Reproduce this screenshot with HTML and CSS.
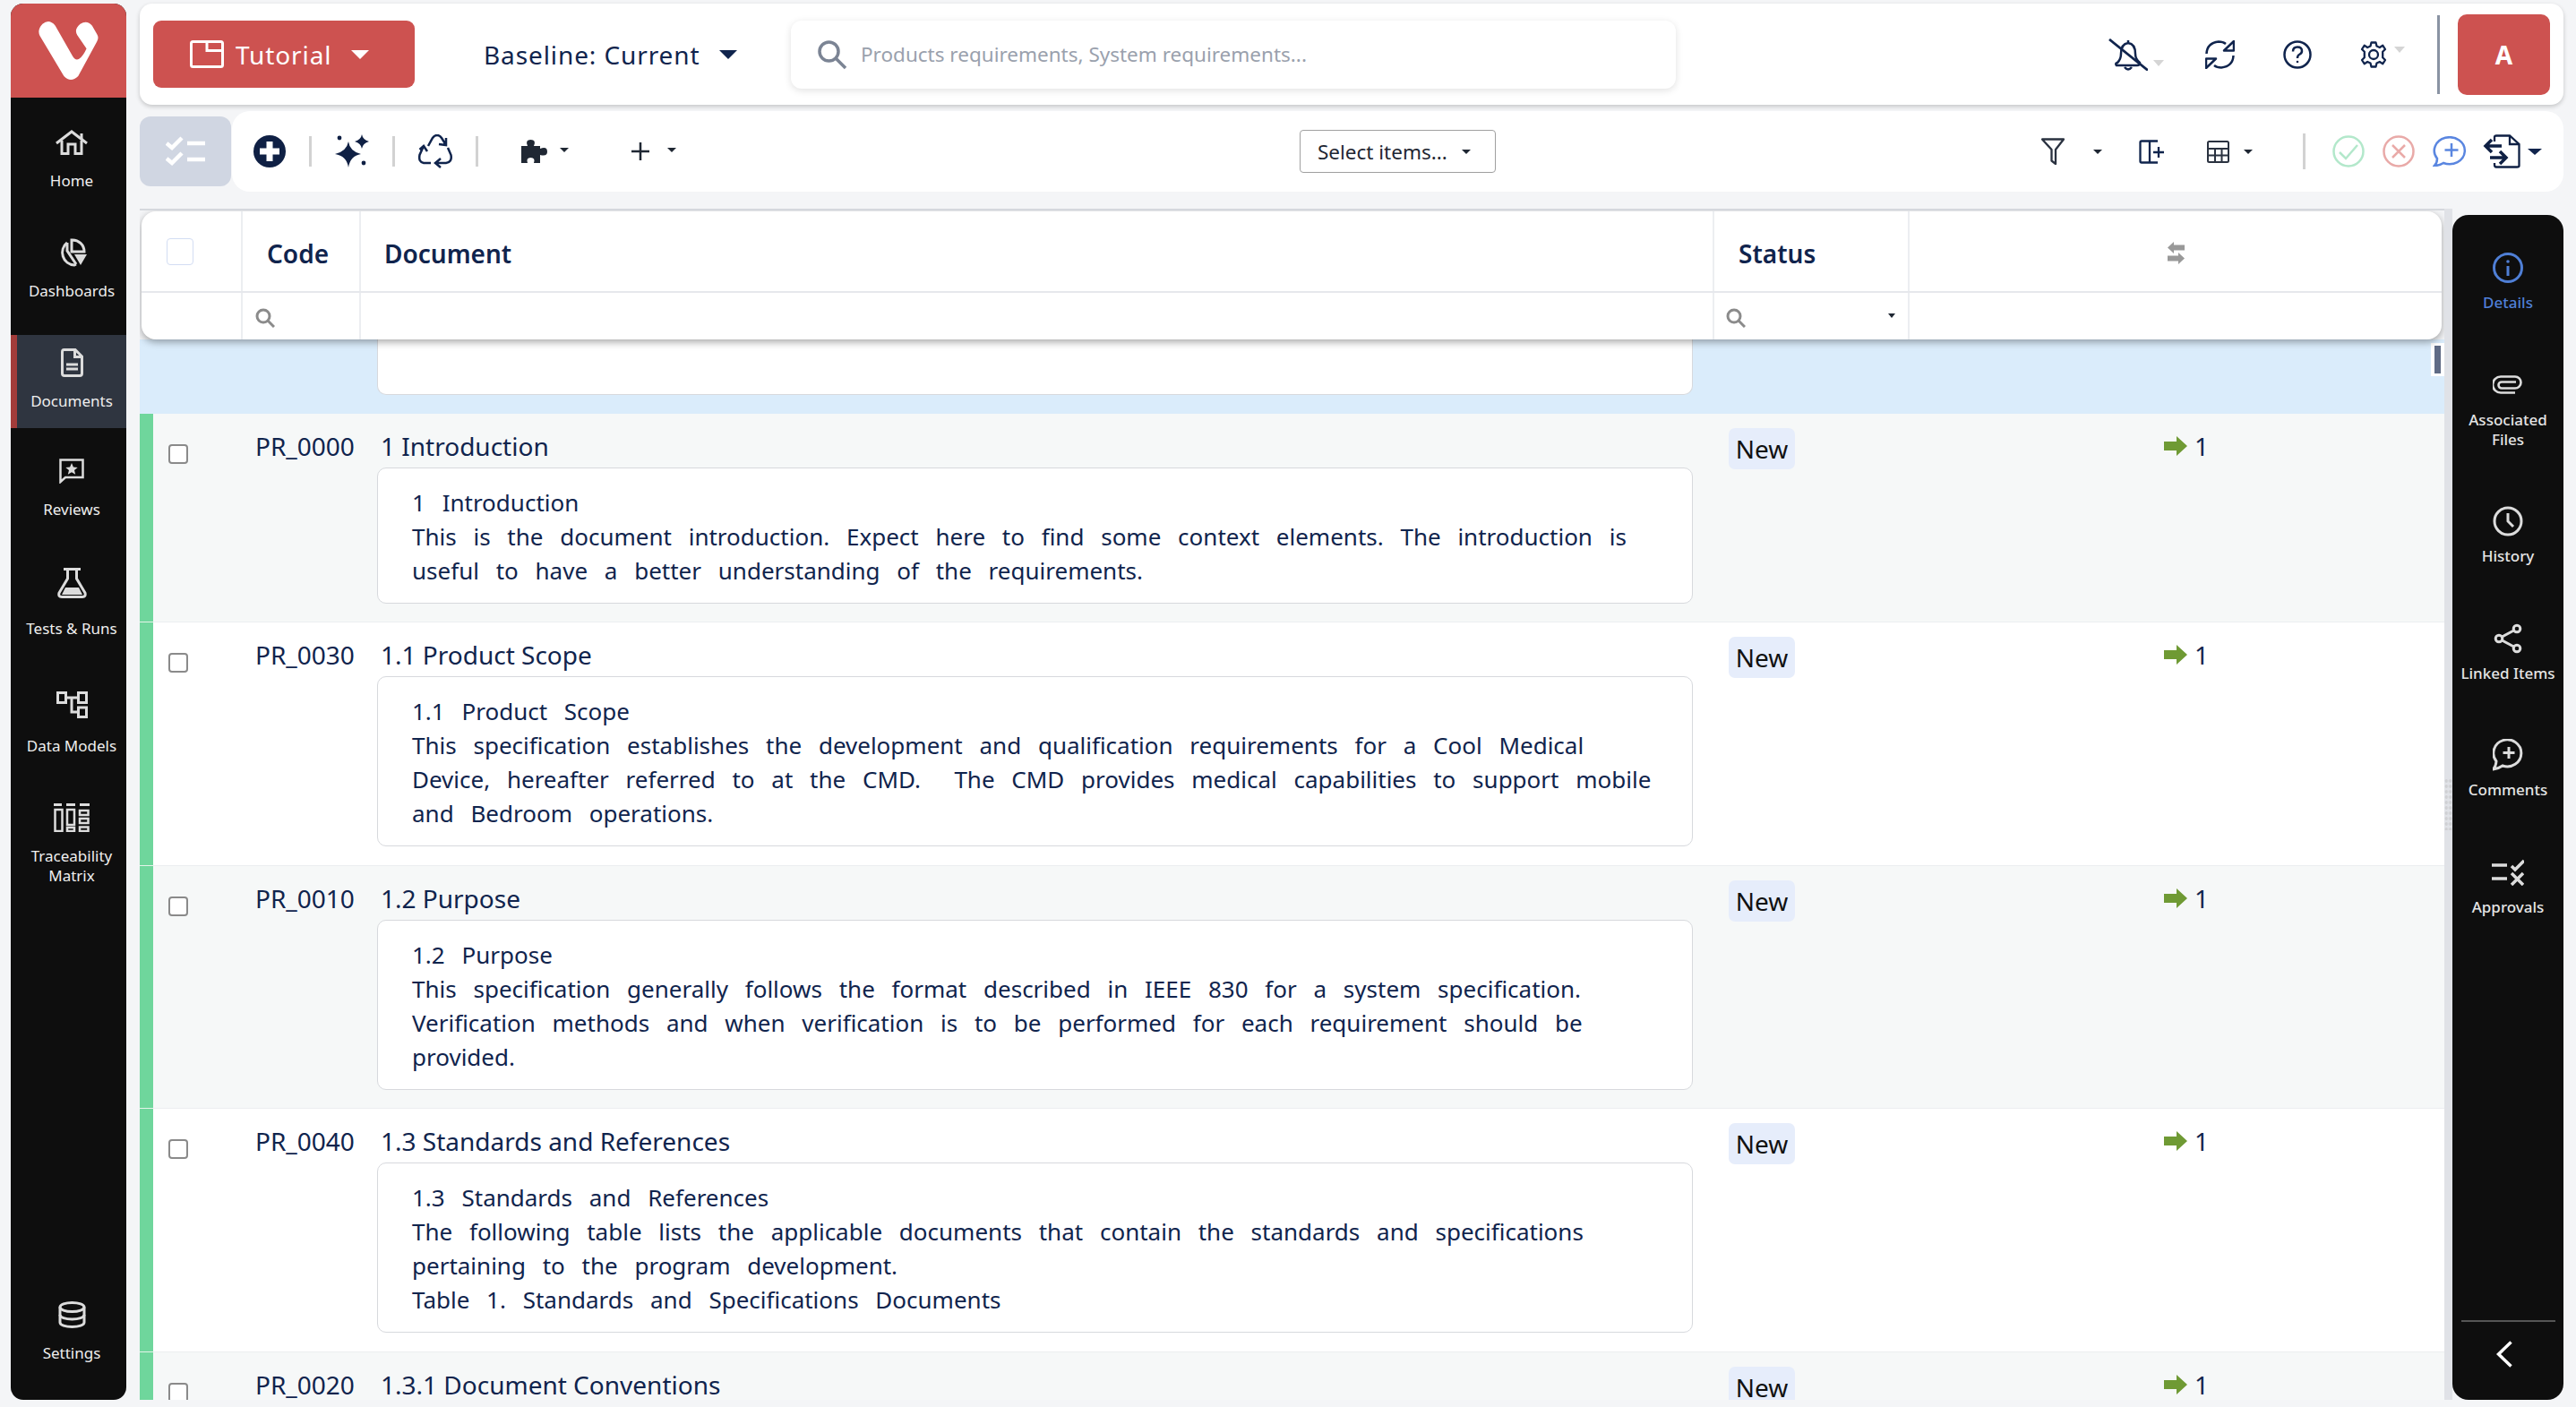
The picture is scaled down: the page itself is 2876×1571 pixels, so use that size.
FILE: index.html
```html
<!DOCTYPE html>
<html lang="en">
<head>
    <meta charset="UTF-8">
    <title>Documents | Tutorial</title>
    <link rel="stylesheet" href="styles.css">
</head>
<body>

    <!-- Left navigation -->
    <nav class="side-nav">
        <div class="logo">
            <svg width="75" height="73" viewBox="60 30 225 220"><path fill="#fff" d="M76 90 Q66 70 85 50 Q108 32 128 56 L186 158 Q196 176 208 168 Q222 158 233 133 L202 88 Q190 68 212 50 Q235 36 252 56 L268 84 Q276 96 268 110 L205 226 Q180 250 157 226 Z"/></svg>
        </div>
        <a class="nav-item nav-first">
            <span class="nav-icon"><svg width="36" height="28" viewBox="0 0 36 28" fill="none" stroke="currentColor" stroke-width="3"><path d="M1 15 L18 2 L35 15"/><path d="M29 10 V4"/><path d="M7 12 V26.500 H14 V16 H22 V26.500 H29 V12"/></svg></span>
            <span class="nav-label">Home</span>
        </a>
        <a class="nav-item">
            <span class="nav-icon"><svg width="34" height="32" viewBox="0 0 34 32" fill="none" stroke="currentColor" stroke-width="3"><path d="M12 5 A14 14 0 0 0 20 30 L22 29"/><path d="M12 5 V14 L22 29"/><path d="M17 2 A13 13 0 0 1 31 15 H17 Z"/><path fill="currentColor" stroke="none" d="M20 18 H34 L27 30 Z"/></svg></span>
            <span class="nav-label">Dashboards</span>
        </a>
        <a class="nav-item active">
            <span class="nav-icon"><svg width="25" height="32" viewBox="0 0 25 32" fill="none" stroke="currentColor" stroke-width="3"><path d="M3.500 1.500 H16 L23.500 9 V28 Q23.500 30.500 21 30.500 H4 Q1.500 30.500 1.500 28 V4 Q1.500 1.500 3.500 1.500 Z"/><path d="M15.500 2 V9.500 H23"/><path d="M6 18 H19 M6 23 H19"/></svg></span>
            <span class="nav-label">Documents</span>
        </a>
        <a class="nav-item nav-reviews">
            <span class="nav-icon"><svg width="28" height="28" viewBox="0 0 28 28" fill="none" stroke="currentColor" stroke-width="2.500"><path d="M1.500 1.500 H26.500 V21 H7 L1.500 26 Z"/><path fill="currentColor" stroke="none" d="M14 5 L15.900 9.500 L20.700 9.900 L17 13 L18.200 17.700 L14 15.200 L9.800 17.700 L11 13 L7.300 9.900 L12.100 9.500 Z"/></svg></span>
            <span class="nav-label">Reviews</span>
        </a>
        <a class="nav-item nav-tests">
            <span class="nav-icon"><svg width="33" height="34" viewBox="0 0 33 34" fill="none" stroke="currentColor" stroke-width="3"><path d="M7 1.500 H26"/><path d="M11.500 2 V12 L2 28 Q0.800 32.500 5 32.500 H28 Q32 32.500 31 28 L21.500 12 V2"/><path fill="currentColor" stroke="none" d="M9 22 H24 L28 30 H5 Z"/></svg></span>
            <span class="nav-label">Tests &amp; Runs</span>
        </a>
        <a class="nav-item nav-models">
            <span class="nav-icon"><svg width="35" height="30" viewBox="0 0 35 30" fill="none" stroke="currentColor" stroke-width="3"><rect x="1.500" y="1.500" width="9" height="11"/><rect x="24.500" y="1.500" width="9" height="11"/><rect x="24.500" y="18" width="9" height="10.500"/><path d="M11 7 H24 M17 7 V23 H24"/></svg></span>
            <span class="nav-label">Data Models</span>
        </a>
        <a class="nav-item">
            <span class="nav-icon"><svg width="40" height="32" viewBox="0 0 40 32" fill="none" stroke="currentColor" stroke-width="2.500"><path d="M0 1.500 H9 M14 1.500 H24 M29 1.500 H40" stroke-width="3"/><rect x="1.500" y="7" width="8" height="24"/><rect x="15" y="7" width="8" height="17"/><rect x="29" y="8" width="9.500" height="5"/><rect x="29" y="17" width="9.500" height="5"/><rect x="15" y="27" width="8" height="4"/><rect x="29" y="26.500" width="9.500" height="4.500"/></svg></span>
            <span class="nav-label">Traceability<br>Matrix</span>
        </a>
        <a class="nav-item nav-bottom">
            <span class="nav-icon"><svg width="31" height="30" viewBox="0 0 31 30" fill="none" stroke="currentColor" stroke-width="3"><ellipse cx="15.500" cy="6.500" rx="13.500" ry="5"/><path d="M2 6.500 V23.500 C2 26.500 8 28.500 15.500 28.500 C23 28.500 29 26.500 29 23.500 V6.500"/><path d="M2 15 C2 18 8 20 15.500 20 C23 20 29 18 29 15"/></svg></span>
            <span class="nav-label">Settings</span>
        </a>
    </nav>

    <div class="main">
        <!-- Top bar -->
        <header class="top-bar">
            <button class="project-btn">
                <svg width="38" height="31" viewBox="0 0 38 31" fill="none" stroke="#fff" stroke-width="3"><path d="M3.500 1.500 H34.500 Q36.500 1.500 36.500 3.500 V27.500 Q36.500 29.500 34.500 29.500 H3.500 Q1.500 29.500 1.500 27.500 V3.500 Q1.500 1.500 3.500 1.500 Z"/><path d="M19 2 V11.500 H36"/></svg>
                <span>Tutorial</span>
                <i class="caret caret-white"></i>
            </button>
            <div class="baseline">Baseline: Current <i class="caret caret-navy"></i></div>
            <div class="search-box">
                <svg width="34" height="34" viewBox="0 0 34 34" fill="none" stroke="#7b8494" stroke-width="3.500"><circle cx="13.500" cy="13.500" r="10.500"/><path d="M21 21 L32 32"/></svg>
                <span>Products requirements, System requirements...</span>
            </div>
            <div class="top-icons">
                <svg class="ic-bell" width="44" height="36" viewBox="0 0 44 36" fill="none" stroke="#10244d" stroke-width="2.500"><path d="M22 2 V5 M10 27 Q14 23 14 17 Q14 6 22 5 Q30 6 30 17 Q30 23 35 27 Q35 30 32 30 H9 Q7 28 10 27 Z"/><path d="M18 32 Q22 37 26 32"/><path d="M1 1 L44 35.500" stroke-width="2.800"/></svg>
                <i class="caret caret-mute"></i>
                <svg class="ic-sync" width="33" height="32" viewBox="0 0 33 32" fill="none" stroke="#10244d" stroke-width="2.500"><path d="M1.500 15 Q2 3 15 1.500 Q20 1.500 23 4"/><path d="M31.500 17 Q31 29 18 30.500 Q13 30.500 10 28"/><path d="M32 1 V11.500 H21 Z M1 31 V20.500 H12 Z" stroke-linejoin="round"/></svg>
                <svg class="ic-help" width="32" height="32" viewBox="0 0 32 32" fill="none" stroke="#10244d" stroke-width="2.500"><circle cx="16" cy="16" r="14.500"/><path d="M11 12.500 Q11 7.500 16 7.500 Q21 7.500 21 12 Q21 14.500 18 16 Q16 17 16 20"/><circle cx="16" cy="24" r="1.300" fill="#10244d" stroke="none"/></svg>
                <svg class="ic-gear" width="30" height="30" viewBox="0 0 30 30" fill="none" stroke="#10244d" stroke-width="2.300"><circle cx="15" cy="15" r="5"/><path d="M12.500 1.500 H17.500 L18.500 5.500 L21.800 7 L25.300 4.800 L28 9 L25.200 11.800 V18.200 L28 21 L25.300 25.200 L21.800 23 L18.500 24.500 L17.500 28.500 H12.500 L11.500 24.500 L8.200 23 L4.700 25.200 L2 21 L4.800 18.200 V11.800 L2 9 L4.700 4.800 L8.200 7 L11.500 5.500 Z" stroke-linejoin="round"/></svg>
                <i class="caret caret-mute"></i>
            </div>
            <div class="avatar-wrap"><div class="avatar">A</div></div>
        </header>

        <!-- Toolbar -->
        <div class="tool-row">
            <div class="tasks-btn">
                <svg width="44" height="34" viewBox="0 0 44 34" fill="none" stroke="#fff" stroke-width="4.500"><path d="M1 8 L7 13 L18 2 M1 25 L7 30 L18 19"/><path d="M24 8 H44 M24 26 H44"/></svg>
            </div>
            <div class="toolbar">
                <div class="tool-group">
                    <svg width="36" height="36" viewBox="0 0 36 36"><circle cx="18" cy="18" r="18" fill="#0f2044"/><path fill="#fff" d="M14.500 7 H21.500 V14.500 H29 V21.500 H21.500 V29 H14.500 V21.500 H7 V14.500 H14.500 Z"/></svg>
                    <i class="tool-sep"></i>
                    <svg width="38" height="38" viewBox="0 0 38 38" fill="#0f2044"><path d="M15 8 Q16.500 19 29 22 Q17 24 15 37 Q13 24 0 22 Q13 19 15 8 Z"/><path d="M30 0 Q31 6 38 8 Q31 10 30 16 Q29 10 22 8 Q29 6 30 0 Z"/><circle cx="5" cy="4" r="2.400"/><circle cx="32" cy="32" r="2.400"/></svg>
                    <i class="tool-sep"></i>
                    <svg width="38" height="38" viewBox="0 0 38 38" fill="none" stroke="#10244d" stroke-width="2.500"><path d="M11 13 L16 4 Q18 1 21 1 Q24 1 26 4 L31 12 M31 4 L31 12 L23 11"/><path d="M6 13 L1.500 23 Q0 31 6 32 H14 M1.500 17 L6 13 L10 19"/><path d="M33 15 L36.500 23 Q38 31 31 32 H19 M25 27 L19 32 L25 37"/></svg>
                    <i class="tool-sep"></i>
                </div>
                <div class="tool-btn tool-puzzle">
                    <svg width="29" height="26" viewBox="0 0 29 26" fill="#1f2733"><path d="M0 7 H7 Q4 0 10.500 0 Q17 0 14 7 H21 V10 Q29 7 29 13.500 Q29 19 21 17 V26 H14 Q16 20 10.500 20 Q5 20 7 26 H0 Z"/></svg>
                    <i class="caret caret-small"></i>
                </div>
                <div class="tool-btn tool-add">
                    <svg width="20" height="20" viewBox="0 0 20 20" stroke="#1f2733" stroke-width="2.500"><path d="M10 0 V20 M0 10 H20"/></svg>
                    <i class="caret caret-small"></i>
                </div>
                <div class="select-items">Select items... <i class="caret caret-small"></i></div>
                <div class="tool-right">
                    <svg class="ic-filter" width="26" height="30" viewBox="0 0 26 30" fill="none" stroke="#2a3240" stroke-width="2.300"><path d="M1 1.500 H25 L16 13 V29 L11.500 25.500 V13 Z" stroke-linejoin="round"/></svg>
                    <i class="caret caret-small ic-caret1"></i>
                    <svg class="ic-split" width="28" height="27" viewBox="0 0 28 27" fill="none" stroke="#10244d" stroke-width="2.300"><path d="M21 1.500 H3 Q1.500 1.500 1.500 3 V24 Q1.500 25.500 3 25.500 H21"/><path d="M12 1.500 V25.500"/><path d="M16 14 H28 M22 8 V20"/></svg>
                    <svg class="ic-table" width="25" height="25" viewBox="0 0 25 25" fill="none" stroke="#2a3240" stroke-width="2"><rect x="1" y="1" width="23" height="23" rx="1.500"/><path d="M1 9 H24 M1 16.500 H24 M9 9 V24 M16.500 9 V24"/></svg>
                    <i class="caret caret-small ic-caret2"></i>
                    <i class="tool-sep ic-sep"></i>
                    <svg class="ic-ok" width="36" height="36" viewBox="0 0 36 36" fill="none" stroke="#b3e8cb" stroke-width="2.500"><circle cx="18" cy="18" r="16.500"/><path d="M8 19 L15 26 L28 11"/></svg>
                    <svg class="ic-no" width="36" height="36" viewBox="0 0 36 36" fill="none" stroke="#e9aaa8" stroke-width="2.500"><circle cx="18" cy="18" r="16.500"/><path d="M11 11 L25 25 M25 11 L11 25"/></svg>
                    <svg class="ic-chat" width="38" height="34" viewBox="0 0 38 34" fill="none" stroke="#5a86e0" stroke-width="2.500"><path d="M5 25 A17 15 0 1 1 12 30 Q7 33 2 33 Q5 30 5 25 Z"/><path d="M21 8 V23 M13.500 15.500 H28.500"/></svg>
                    <svg class="ic-export" width="42" height="38" viewBox="0 0 42 38" fill="none" stroke="#0f2044" stroke-width="2.300"><path d="M13 8 V3 Q13 1.500 15 1.500 H30 L40.500 11 V35 Q40.500 36.500 38 36.500 H15 Q13 36.500 13 34 V32"/><path d="M30 2 V11 H40"/><path d="M4 13 H21 M10 6 L3 13 L10 20 M8 26 H25 M19 19 L26 26 L19 33" stroke-width="3.500"/></svg>
                    <i class="caret caret-navy-small"></i>
                </div>
            </div>
        </div>

        <div class="content">
            <section class="doc-table">
                <!-- Frozen header -->
                <div class="grid-head">
                    <div class="head-row">
                        <div class="cell cell-check"><span class="head-check"></span></div>
                        <div class="cell head-code">Code</div>
                        <div class="cell head-doc">Document</div>
                        <div class="cell head-status">Status</div>
                        <div class="cell head-links">
                            <svg width="19" height="25" viewBox="0 0 19 25" fill="#999"><path d="M7 0 V3.500 H19 V9.500 H7 V13 L0 6.500 Z"/><path d="M12 12 V15.500 H0 V21.500 H12 V25 L19 18.500 Z"/></svg>
                        </div>
                    </div>
                    <div class="filter-row">
                        <div class="cell cell-check"></div>
                        <div class="cell filter-cell"><svg width="22" height="22" viewBox="0 0 22 22" fill="none" stroke="#8b8b8b" stroke-width="3"><circle cx="9" cy="9" r="7"/><path d="M14 14 L21 21"/></svg></div>
                        <div class="cell filter-doc"></div>
                        <div class="cell filter-status">
                            <svg width="22" height="22" viewBox="0 0 22 22" fill="none" stroke="#8b8b8b" stroke-width="3"><circle cx="9" cy="9" r="7"/><path d="M14 14 L21 21"/></svg>
                            <i class="caret caret-tiny"></i>
                        </div>
                        <div class="cell filter-links"></div>
                    </div>
                </div>

                <div class="grid-body">
                    <div class="row row-selected">
                        <div class="doc-card doc-card-cut"></div>
                    </div>

                    <div class="row">
                        <div class="strip"></div>
                        <div class="col-check"><span class="check"></span></div>
                        <div class="col-code">PR_0000</div>
                        <div class="col-doc">
                            <div class="doc-title">1 Introduction</div>
                            <div class="doc-card">1 Introduction<br>This is the document introduction. Expect here to find some context elements. The introduction is useful to have a better understanding of the requirements.</div>
                        </div>
                        <div class="col-status"><span class="badge">New</span></div>
                        <div class="col-links"><svg width="26" height="22" viewBox="0 0 26 22" fill="#6f9a34"><path d="M0 6 H14 V0 L26 11 L14 22 V16 H0 Z"/></svg><span>1</span></div>
                    </div>

                    <div class="row">
                        <div class="strip"></div>
                        <div class="col-check"><span class="check"></span></div>
                        <div class="col-code">PR_0030</div>
                        <div class="col-doc">
                            <div class="doc-title">1.1 Product Scope</div>
                            <div class="doc-card">1.1 Product Scope<br>This specification establishes the development and qualification requirements for a Cool Medical Device, hereafter referred to at the CMD. &nbsp;The CMD provides medical capabilities to support mobile and Bedroom operations.</div>
                        </div>
                        <div class="col-status"><span class="badge">New</span></div>
                        <div class="col-links"><svg width="26" height="22" viewBox="0 0 26 22" fill="#6f9a34"><path d="M0 6 H14 V0 L26 11 L14 22 V16 H0 Z"/></svg><span>1</span></div>
                    </div>

                    <div class="row">
                        <div class="strip"></div>
                        <div class="col-check"><span class="check"></span></div>
                        <div class="col-code">PR_0010</div>
                        <div class="col-doc">
                            <div class="doc-title">1.2 Purpose</div>
                            <div class="doc-card">1.2 Purpose<br>This specification generally follows the format described in IEEE 830 for a system specification. Verification methods and when verification is to be performed for each requirement should be provided.</div>
                        </div>
                        <div class="col-status"><span class="badge">New</span></div>
                        <div class="col-links"><svg width="26" height="22" viewBox="0 0 26 22" fill="#6f9a34"><path d="M0 6 H14 V0 L26 11 L14 22 V16 H0 Z"/></svg><span>1</span></div>
                    </div>

                    <div class="row">
                        <div class="strip"></div>
                        <div class="col-check"><span class="check"></span></div>
                        <div class="col-code">PR_0040</div>
                        <div class="col-doc">
                            <div class="doc-title">1.3 Standards and References</div>
                            <div class="doc-card">1.3 Standards and References<br>The following table lists the applicable documents that contain the standards and specifications pertaining to the program development.<br>Table 1. Standards and Specifications Documents</div>
                        </div>
                        <div class="col-status"><span class="badge">New</span></div>
                        <div class="col-links"><svg width="26" height="22" viewBox="0 0 26 22" fill="#6f9a34"><path d="M0 6 H14 V0 L26 11 L14 22 V16 H0 Z"/></svg><span>1</span></div>
                    </div>

                    <div class="row">
                        <div class="strip"></div>
                        <div class="col-check"><span class="check"></span></div>
                        <div class="col-code">PR_0020</div>
                        <div class="col-doc">
                            <div class="doc-title">1.3.1 Document Conventions</div>
                        </div>
                        <div class="col-status"><span class="badge">New</span></div>
                        <div class="col-links"><svg width="26" height="22" viewBox="0 0 26 22" fill="#6f9a34"><path d="M0 6 H14 V0 L26 11 L14 22 V16 H0 Z"/></svg><span>1</span></div>
                    </div>
                </div>

                <div class="scroll-track"><span class="scroll-thumb"></span></div>
            </section>

            <div class="gutter"><span class="grip"></span></div>

            <!-- Right panel tabs -->
            <aside class="side-panel">
                <a class="panel-item selected">
                    <span class="panel-icon"><svg width="34" height="34" viewBox="0 0 34 34" fill="none" stroke="currentColor" stroke-width="3"><circle cx="17" cy="17" r="15.500"/><path d="M17 15 V26"/><circle cx="17" cy="10" r="1.800" fill="currentColor" stroke="none"/></svg></span>
                    <span class="panel-label">Details</span>
                </a>
                <a class="panel-item">
                    <span class="panel-icon"><svg width="34" height="21" viewBox="0 0 34 21" fill="none" stroke="currentColor" stroke-width="2.600"><path d="M25 19.500 H9 A8 8 0 0 1 9 1.500 H25 A6.500 6.500 0 0 1 25 14.500 H10 A3 3 0 0 1 10 7.500 H26"/></svg></span>
                    <span class="panel-label">Associated<br>Files</span>
                </a>
                <a class="panel-item">
                    <span class="panel-icon"><svg width="34" height="34" viewBox="0 0 34 34" fill="none" stroke="currentColor" stroke-width="3"><circle cx="17" cy="17" r="15"/><path d="M17 8 V17 L23 23"/></svg></span>
                    <span class="panel-label">History</span>
                </a>
                <a class="panel-item">
                    <span class="panel-icon"><svg width="32" height="34" viewBox="0 0 32 34" fill="none" stroke="currentColor" stroke-width="3"><circle cx="26" cy="6" r="3.800"/><circle cx="6" cy="17" r="3.800"/><circle cx="26" cy="28" r="3.800"/><path d="M9.500 15 L22.500 8 M9.500 19 L22.500 26"/></svg></span>
                    <span class="panel-label">Linked Items</span>
                </a>
                <a class="panel-item">
                    <span class="panel-icon"><svg width="34" height="36" viewBox="0 0 34 36" fill="none" stroke="currentColor" stroke-width="3"><path d="M4 25 A15.500 15 0 1 1 11 30 Q6 33.500 0.500 34 Q3.500 31 4 25 Z"/><path d="M18 9 V22 M11.500 15.500 H24.500"/></svg></span>
                    <span class="panel-label">Comments</span>
                </a>
                <a class="panel-item">
                    <span class="panel-icon"><svg width="36" height="30" viewBox="0 0 36 30" fill="none" stroke="currentColor" stroke-width="3.500"><path d="M0 7 H17 M0 22 H17"/><path d="M22 8 L26 12 L36 2 M22 16 L35 29 M35 16 L22 29"/></svg></span>
                    <span class="panel-label">Approvals</span>
                </a>
                <div class="panel-foot">
                    <svg width="18" height="30" viewBox="0 0 18 30" fill="none" stroke="#fff" stroke-width="3.500"><path d="M16.500 1.500 L2.500 15 L16.500 28.500"/></svg>
                </div>
            </aside>
        </div>
    </div>

</body>
</html>
```

FILE: styles.css
```css
/* General Page Styling */
* {
    box-sizing: border-box;
}

body {
    margin: 0;
    height: 1571px;
    padding: 4px 14px 8px 12px;
    display: flex;
    gap: 15px;
    overflow: hidden;
    background: #f4f5f7;
    font-family: "Noto Sans", sans-serif;
    color: #10244d;
}

svg {
    display: block;
    flex: none;
}

/* Carets */
.caret {
    display: inline-block;
    width: 0;
    height: 0;
    border-style: solid;
    border-color: #1f2733 transparent transparent;
}
.caret-white { border-width: 10px 10px 0; border-top-color: #fff; }
.caret-navy { border-width: 10px 10px 0; border-top-color: #10244d; }
.caret-mute { border-width: 7px 6px 0; border-top-color: #d5d5d5; }
.caret-small { border-width: 5px 5px 0; }
.caret-tiny { border-width: 5px 4px 0; }
.caret-navy-small { border-width: 7px 8px 0; border-top-color: #10244d; margin-left: 8px; }

/* Left navigation */
.side-nav {
    width: 129px;
    flex: none;
    display: flex;
    flex-direction: column;
    background: #0e0e0e;
    border-radius: 14px;
    overflow: hidden;
    padding-bottom: 22px;
}

.logo {
    height: 105px;
    flex: none;
    background: #cd5250;
    display: flex;
    justify-content: center;
    padding-top: 16px;
}

.nav-item {
    height: 104px;
    flex: none;
    margin-top: 19px;
    padding: 13px 0 0 7px;
    display: flex;
    flex-direction: column;
    align-items: center;
    color: #dcdcdc;
}
.nav-item.active { background: #2f3540; border-left: 7px solid #a33c3a; padding-left: 0; }
.nav-reviews { margin-top: 17px; }
.nav-tests { margin-top: 21px; height: 112px; }
.nav-tests .nav-icon { margin-bottom: 22px; }
.nav-models { margin-top: 24px; height: 107px; }
.nav-models .nav-icon { margin-bottom: 17px; }
.nav-bottom { margin-top: auto; }

.nav-icon, .panel-icon {
    height: 36px;
    display: flex;
    align-items: center;
    justify-content: center;
    flex: none;
}
.nav-icon { margin-bottom: 14px; }

.nav-label {
    font-size: 17px;
    line-height: 22px;
    text-align: center;
    color: #eeeeee;
    white-space: nowrap;
}

/* Main column */
.main {
    flex: 1;
    min-width: 0;
    display: flex;
    flex-direction: column;
}

/* Top bar */
.top-bar {
    height: 113px;
    flex: none;
    display: flex;
    align-items: center;
    background: #fff;
    border-radius: 14px;
    box-shadow: 0 2px 5px rgba(0, 0, 0, 0.2);
    padding-left: 15px;
}

.project-btn {
    width: 292px;
    height: 75px;
    display: flex;
    align-items: center;
    border: 0;
    border-radius: 9px;
    background: #cd5250;
    color: #fff;
    font-family: inherit;
    font-size: 28px;
    letter-spacing: 0.9px;
    padding: 0 0 0 41px;
}
.project-btn span { margin-left: 13px; }
.project-btn .caret { margin-left: 22px; }

.baseline {
    width: 283px;
    margin-left: 77px;
    font-size: 28px;
    letter-spacing: 0.9px;
    display: flex;
    align-items: center;
    justify-content: space-between;
    white-space: pre;
}

.search-box {
    width: 988px;
    height: 76px;
    margin-left: 60px;
    display: flex;
    align-items: center;
    gap: 15px;
    padding-left: 29px;
    background: #fff;
    border-radius: 12px;
    box-shadow: 0 2px 8px rgba(0, 0, 0, 0.12);
    font-size: 22.500px;
    color: #9aa1ad;
}

.top-icons {
    margin-left: 483px;
    width: 360px;
    display: flex;
    align-items: center;
}
.top-icons .caret:first-of-type { margin: 20px 0 0 6px; }
.ic-sync { margin-left: 46px; }
.ic-help { margin-left: 54px; }
.ic-gear { margin-left: 54px; }
.ic-gear + .caret { margin: -10px 0 0 8px; }

.avatar-wrap {
    height: 88px;
    border-left: 3px solid #8a93a3;
    padding-left: 20px;
    display: flex;
    align-items: center;
    margin-left: auto;
    margin-right: 15px;
}

.avatar {
    width: 103px;
    height: 90px;
    border-radius: 10px;
    background: #cd5250;
    color: #fff;
    font-size: 28px;
    font-weight: 700;
    display: flex;
    align-items: center;
    justify-content: center;
}

/* Toolbar */
.tool-row {
    height: 90px;
    flex: none;
    margin-top: 7px;
    display: flex;
    align-items: center;
}

.tasks-btn {
    width: 102px;
    height: 78px;
    flex: none;
    background: #d0d6e2;
    border-radius: 12px;
    display: flex;
    align-items: center;
    justify-content: center;
}

.toolbar {
    flex: 1;
    height: 90px;
    margin-left: 1px;
    background: #fff;
    border-radius: 20px;
    display: flex;
    align-items: center;
    padding-left: 24px;
}

.tool-group {
    display: flex;
    align-items: center;
    gap: 26px;
}

.tool-sep {
    display: block;
    width: 3px;
    height: 34px;
    background: #d2d2d2;
}

.tool-btn {
    display: flex;
    align-items: center;
}
.tool-puzzle { margin-left: 48px; gap: 14px; }
.tool-puzzle .caret, .tool-add .caret { margin-top: -4px; }
.tool-add { margin-left: 70px; gap: 20px; }

.select-items {
    width: 219px;
    height: 48px;
    margin-left: 696px;
    display: flex;
    align-items: center;
    gap: 10px;
    padding-left: 19px;
    border: 1px solid #a0a0a0;
    border-radius: 4px;
    font-size: 22.500px;
    color: #1f2733;
    white-space: pre;
}

.tool-right {
    flex: 1;
    display: flex;
    align-items: center;
}
.ic-filter { margin-left: 609px; }
.ic-caret1 { margin-left: 32px; }
.ic-split { margin-left: 41px; }
.ic-table { margin-left: 48px; }
.ic-caret2 { margin-left: 16px; }
.ic-sep { margin-left: 56px; height: 40px; }
.ic-ok { margin-left: 30px; }
.ic-no { margin-left: 20px; }
.ic-chat { margin-left: 20px; }
.ic-export { margin-left: 18px; }

/* Content area */
.content {
    flex: 1;
    min-height: 0;
    margin-top: 19px;
    display: flex;
}

.doc-table {
    width: 2573px;
    flex: none;
    position: relative;
    display: flex;
    flex-direction: column;
    overflow: hidden;
    border-top: 2px solid #d5d8dd;
}

/* Frozen header */
.grid-head {
    margin: 1px 3px 0 2px;
    flex: none;
    position: relative;
    z-index: 2;
    background: #fff;
    border-radius: 16px;
    box-shadow: 0 3px 8px rgba(0, 0, 0, 0.35);
}

.head-row, .filter-row {
    display: flex;
    font-size: 28px;
}
.head-row { height: 91px; border-bottom: 2px solid #e6e8ec; }
.filter-row { height: 52px; }

.cell {
    display: flex;
    align-items: center;
    border-right: 2px solid #eceef1;
    font-weight: 600;
}
.cell-check { width: 113px; padding-left: 28px; }
.head-check {
    width: 30px;
    height: 30px;
    border: 1px solid #d3ddf3;
    border-radius: 4px;
}
.head-code { width: 132px; padding: 4px 0 0 27px; }
.head-doc { width: 1511px; padding: 4px 0 0 26px; }
.head-status { width: 218px; padding: 4px 0 0 27px; }
.head-links { flex: 1; border-right: 0; padding: 4px 0 0 288px; }

.filter-cell { width: 132px; padding: 3px 0 0 14px; }
.filter-doc { width: 1511px; }
.filter-links { flex: 1; border-right: 0; }
.filter-status {
    width: 218px;
    padding: 3px 14px 0 13px;
    justify-content: space-between;
}
.filter-status .caret { margin-top: -4px; }

/* Rows */
.grid-body {
    flex: 1;
    min-height: 0;
    overflow: hidden;
    font-size: 28px;
}

.row {
    display: grid;
    grid-template-columns: 15px 100px 132px 1511px 218px 1fr;
    padding-top: 17px;
    padding-bottom: 20.500px;
    border-bottom: 1px solid #eceef0;
    background: #fff;
    position: relative;
}
.row:nth-child(even) { background: #f6f8f8; }

.row-selected {
    display: block;
    height: 82.500px;
    padding: 0 0 0 265px;
    background: #daecfb;
    border: 0;
}

.strip {
    position: absolute;
    left: 0;
    top: 0;
    bottom: -1px;
    width: 15px;
    background: #6fd69c;
    border-bottom: 1px solid #e4f4ea;
}

.col-check { grid-column: 2; padding: 17px 0 0 17px; }
.check {
    display: block;
    width: 22px;
    height: 22px;
    background: #fff;
    border: 2px solid #8a8a8a;
    border-radius: 4px;
}

.col-code { grid-column: 3; padding-left: 14px; line-height: 38px; }
.col-doc { grid-column: 4; padding: 0 24px 0 18px; }
.doc-title { line-height: 38px; padding-left: 4px; margin-bottom: 5px; }

.doc-card {
    width: 1469px;
    padding: 19px 38px 17px;
    background: #fff;
    border: 1px solid #d7d9dd;
    border-radius: 10px;
    font-size: 26px;
    line-height: 38px;
    word-spacing: 12px;
}
.doc-card-cut {
    height: 62px;
    border-top: 0;
    border-radius: 0 0 10px 10px;
}

.col-status { grid-column: 5; padding-left: 16px; }
.badge {
    display: block;
    width: 74px;
    height: 46px;
    background: #e6edfb;
    border-radius: 7px;
    color: #111;
    line-height: 46px;
    text-align: center;
    margin-top: -1px;
}

.col-links {
    grid-column: 6;
    padding-left: 284px;
    display: flex;
    align-items: flex-start;
    gap: 8px;
    line-height: 38px;
    height: 38px;
}
.col-links svg { margin-top: 8px; }

/* Scrollbar */
.scroll-track {
    position: absolute;
    top: 148px;
    right: 0;
    width: 15px;
    height: 37px;
    background: #fff;
    padding: 3px 4px;
}
.scroll-thumb {
    display: block;
    height: 31px;
    background: #5f6b85;
}

/* Splitter */
.gutter {
    width: 9px;
    flex: none;
    background: #e0e2e7;
    display: flex;
    align-items: center;
    justify-content: center;
}
.grip {
    width: 9px;
    height: 58px;
    background: radial-gradient(circle, #cfd0d3 1.500px, transparent 2px) 0 0 / 4.500px 6px;
}

/* Right panel */
.side-panel {
    flex: 1;
    margin-top: 7px;
    padding-top: 41px;
    display: flex;
    flex-direction: column;
    align-items: center;
    gap: 62.500px;
    background: #0e0e0e;
    border-radius: 18px;
    color: #dcdcdc;
}

.panel-item {
    display: flex;
    flex-direction: column;
    align-items: center;
}
.panel-item.selected { color: #4f7fd6; }
.panel-icon { margin-bottom: 10px; }

.panel-label {
    font-size: 17px;
    line-height: 22px;
    font-weight: 500;
    text-align: center;
    color: #e4e4e4;
    white-space: nowrap;
}
.panel-item.selected .panel-label { color: #4f7fd6; }

.panel-foot {
    margin-top: auto;
    width: 105px;
    height: 89px;
    flex: none;
    border-top: 2px solid #555;
    display: flex;
    align-items: center;
    justify-content: center;
    padding: 0 8px 16px 0;
}
```
